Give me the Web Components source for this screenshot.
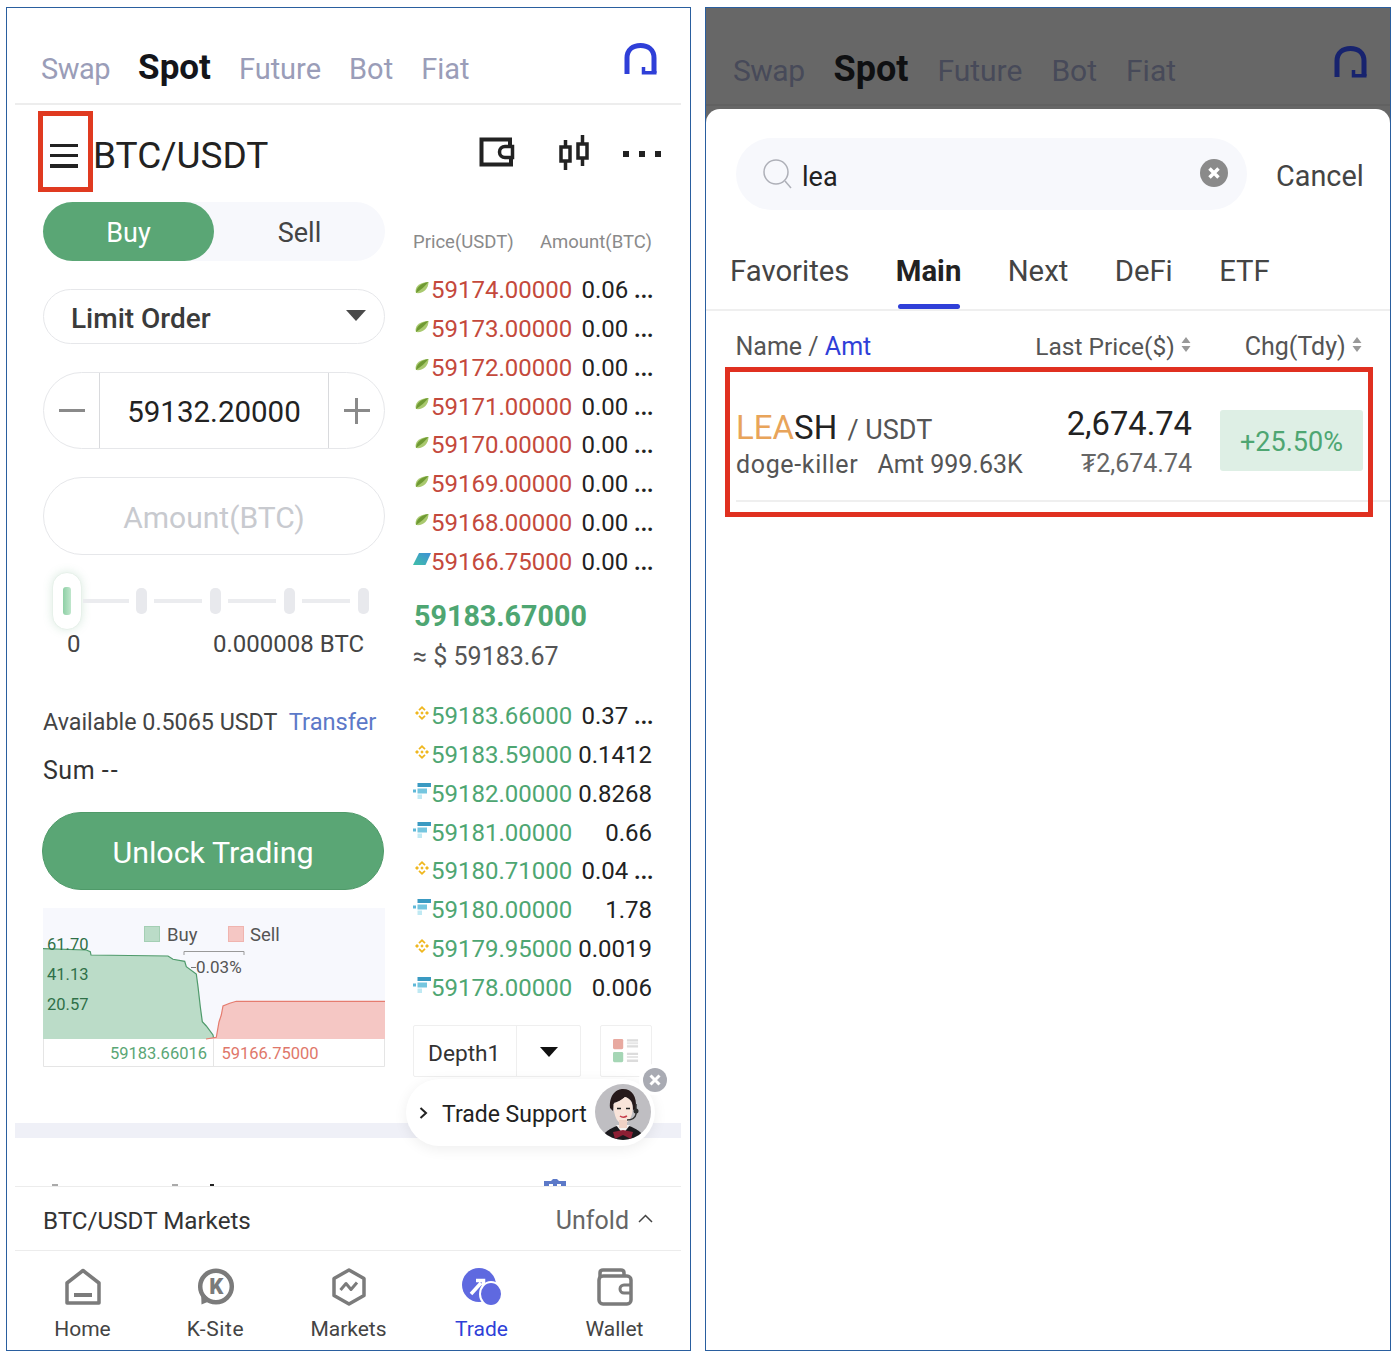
<!DOCTYPE html>
<html><head><meta charset="utf-8"><style>
html,body{margin:0;padding:0;background:#fff}
body{width:1400px;height:1362px;overflow:hidden;font-family:Roboto,"Liberation Sans",sans-serif;box-sizing:border-box;padding:7px 0 0 6px;display:flex;gap:14px;align-items:flex-start}
</style></head><body>
<x-phone>
  <x-topbar tone="light"></x-topbar>
  <x-pair></x-pair>
  <x-trade>
    <x-toggle slot="form"></x-toggle>
    <x-limit slot="form"></x-limit>
    <x-stepper slot="form"></x-stepper>
    <x-amount slot="form"></x-amount>
    <x-slider slot="form"></x-slider>
    <x-summary slot="form"></x-summary>
    <x-unlock slot="form"></x-unlock>
    <x-depth-chart slot="form"></x-depth-chart>
    <x-book slot="book"></x-book>
  </x-trade>
  <x-lower></x-lower>
  <x-markets></x-markets>
  <x-nav></x-nav>
  <x-support></x-support>
  <x-mark style="left:31px;top:103px;width:55px;height:81px"></x-mark>
</x-phone>
<x-phone style="width:686px;background:#676767">
  <x-topbar tone="dark"></x-topbar>
  <x-sheet></x-sheet>
</x-phone>
<script>
const IC={
 leaf:`<svg viewBox="0 0 14 13"><path d="M1 12C-1 6 5 1 13.500 1 13.500 8 8 13 1 12Z" fill="#a9c96f"/><path d="M1 12C1 7 6 2 13.500 1 10 5 6 9 1 12Z" fill="#6f9a33"/></svg>`,
 para:`<svg viewBox="0 0 18 14"><defs><linearGradient id="pg" x1="0" y1="1" x2="1" y2="0"><stop offset="0" stop-color="#3fc0a8"/><stop offset="1" stop-color="#3f8fd6"/></linearGradient></defs><path d="M6 1H18L12.500 13H0Z" fill="url(#pg)"/></svg>`,
 bnb:`<svg viewBox="0 0 14 14" fill="#efb71f"><path d="M7 5.300 8.700 7 7 8.700 5.300 7Z"/><path d="M7 0 10.600 3.600 9.400 4.800 7 2.400 4.600 4.800 3.400 3.600Z"/><path d="M7 14 10.600 10.400 9.400 9.200 7 11.600 4.600 9.200 3.400 10.400Z"/><path d="M0 7 2 5 4 7 2 9Z"/><path d="M14 7 12 5 10 7 12 9Z"/></svg>`,
 bars:`<svg viewBox="0 0 18 16"><rect x="4.500" y="0" width="13.500" height="4" fill="#3a9ac2"/><rect x="0" y="6.500" width="3" height="3" fill="#5fb8d8"/><rect x="4.500" y="5.500" width="9.500" height="5" fill="#75c6df"/><rect x="4.500" y="11.500" width="4.500" height="4.500" fill="#bfe9f3"/></svg>`,
 head:`<svg viewBox="0 0 33 32" fill="none" stroke="currentColor"><path d="M3 31V15C3 6.500 9 2.500 16.500 2.500S30 6.500 30 15V30" stroke-width="5"/><path d="M32.500 29.800H19.500V24" stroke-width="3.500"/></svg>`,
 wallet:`<svg viewBox="0 0 36 30" fill="none" stroke="#222" stroke-width="4"><path d="M31 8V2.500H2.500V27.500H32V22"/><path d="M33.500 9.500H26A5.500 5.500 0 0 0 26 20.500H33.500Z" stroke-width="3.500"/></svg>`,
 candle:`<svg viewBox="0 0 30 35" fill="none" stroke="#222" stroke-width="3.500"><rect x="2" y="12" width="9" height="14"/><rect x="19" y="9" width="9" height="14"/><path d="M6.500 5V12M6.500 26V35M23.500 0V9M23.500 23V31"/></svg>`,
 home:`<svg viewBox="0 0 36 38" fill="none" stroke="#7b7b7b" stroke-width="3.500" stroke-linejoin="round"><path d="M18 2.500 34 15V35H2V15Z"/><path d="M9 27H27" stroke-width="4"/></svg>`,
 ksite:`<svg viewBox="0 0 38 38" fill="none"><circle cx="19" cy="18.500" r="15.800" stroke="#7b7b7b" stroke-width="4.500"/><path d="M4 22 4.500 36.500 13 33Z" fill="#7b7b7b"/><text x="19.500" y="26" text-anchor="middle" font-family="Roboto" font-weight="900" font-size="22" fill="#7b7b7b">K</text></svg>`,
 markets:`<svg viewBox="0 0 36 38" fill="none" stroke="#7b7b7b" stroke-width="3.500" stroke-linejoin="round"><path d="M18 2 33 10.500V27.500L18 36 3 27.500V10.500Z"/><path d="M9.500 22 15 15.500 20 21.500 26 14.500" stroke-width="3"/></svg>`,
 trade:`<svg viewBox="0 0 40 38"><ellipse cx="17" cy="17" rx="17" ry="17" fill="#5f69e0"/><path d="M9 26 19 15M14 12.500H21.500V20" fill="none" stroke="#fff" stroke-width="3.500"/><ellipse cx="29" cy="26" rx="11" ry="12" fill="#5f69e0" stroke="#fff" stroke-width="2"/></svg>`,
 purse:`<svg viewBox="0 0 36 38" fill="none" stroke="#7b7b7b" stroke-width="3.500" stroke-linejoin="round"><path d="M3 10V5Q3 2 6 2H24Q27 2 27 5V8"/><rect x="2" y="8" width="32" height="28" rx="4"/><path d="M34 17H27A4 4 0 0 0 27 25H34" stroke-width="3"/></svg>`,
 layout:`<svg viewBox="0 0 28 26"><rect x="0" y="0" width="11" height="11" rx="1.500" fill="#e8a9a0"/><rect x="0" y="14" width="11" height="11" rx="1.500" fill="#a5d6b5"/><path d="M15 1.500H27M15 8H27M15 16H27M15 23.500H27" stroke="#dcdcdc" stroke-width="2.500"/><path d="M15 4.700H27M15 19.500H27" stroke="#e6e6e6" stroke-width="2"/></svg>`
};
function ce(name,css,html,init){customElements.define(name,class extends HTMLElement{
  connectedCallback(){ if(this.shadowRoot)return; const r=this.attachShadow({mode:'open'});
    const h=typeof html==='function'?html(this):html;
    r.innerHTML=`<style>${css}</style>${h}`; init&&init(this,r);} });}
const ICO=(n,w,h,st='')=>`<x-icon name="${n}" style="width:${w}px;height:${h}px;${st}"></x-icon>`;
ce('x-icon',':host{display:inline-block;flex:none;line-height:0}svg{width:100%;height:100%;display:block}',e=>IC[e.getAttribute('name')]);
ce('x-phone',`:host{display:flex;flex-direction:column;position:relative;box-sizing:border-box;width:685px;height:1344px;border:1px solid #2a5f9f;background:#fff;overflow:hidden}`,'<slot></slot>');
ce('x-mark',`:host{position:absolute;box-sizing:border-box;border:5px solid #e03a20}`,'');
ce('x-topbar',`:host{display:flex;align-items:baseline;box-sizing:border-box;height:97px;flex:none;padding:0 0 0 34px;gap:28px;font-size:29px;color:#9a9db8;position:relative}
 .line{position:absolute;left:8px;right:9px;top:95px;height:2px;background:#ededed}
 .sw{letter-spacing:-.5px}
 :host([tone=dark]){background:#676767;color:#474a59;font-size:30px;gap:29px;padding-left:27px;height:115px;margin-bottom:-14px}
 :host([tone=dark]) .line{top:96px;left:0;right:0;height:2px;background:#616161}
 :host([tone=dark]) b{color:#0f1012;font-size:36px}
 :host([tone=dark]) span{padding-top:48px}
 :host([tone=dark]) .h{right:23px;top:38px;color:#17236e}
 span,b{line-height:1;padding-top:47px} b{font-size:35px;color:#14151a;font-weight:700;padding-top:0}
 .h{position:absolute;right:33px;top:35px;color:#2f3fd8}`,
 e=>`<span class="sw">Swap</span><b>Spot</b><span>Future</span><span>Bot</span><span>Fiat</span><div class="line"></div><div class="h">${ICO('head',33,32)}</div>`);
ce('x-pair',`:host{display:flex;align-items:center;box-sizing:border-box;height:97px;flex:none;padding:0 29px 0 43px;position:relative}
 .m{width:28px;height:24px;display:flex;flex-direction:column;justify-content:space-between;margin-top:4px} .m i{display:block;height:3.500px;background:#222}
 .t{font-size:37px;color:#222;margin-left:15px;margin-top:3px;flex:1}
 .r{display:flex;align-items:center;margin-top:-3px}
 .d{display:flex;gap:10px;margin-left:34px;margin-top:3px}.d i{width:6px;height:6px;background:#222;display:block}`,
 `<div class="m"><i></i><i></i><i></i></div><div class="t">BTC/USDT</div><div class="r">${ICO('wallet',36,30)}<span style="width:44px"></span>${ICO('candle',30,35)}<div class="d"><i></i><i></i><i></i></div></div>`);
ce('x-trade',`:host{display:grid;grid-template-columns:342px 239px;column-gap:28px;box-sizing:border-box;height:921px;flex:none;padding-left:36px}
 .f,.b{display:flex;flex-direction:column;min-width:0}`,`<div class="f"><slot name="form"></slot></div><div class="b"><slot name="book"></slot></div>`);
ce('x-toggle',`:host{display:grid;grid-template-columns:171px 1fr;height:59px;background:#f7f8fc;border-radius:30px;font-size:27px;color:#444;flex:none}
 div{display:flex;align-items:center;justify-content:center;padding-top:3px;box-sizing:border-box}.a{background:#5aa675;color:#fff;border-radius:30px}`,`<div class="a">Buy</div><div>Sell</div>`);
ce('x-limit',`:host{display:flex;align-items:center;justify-content:space-between;box-sizing:border-box;height:55px;margin-top:28px;border:1px solid #e6e7ea;border-radius:28px;padding:0 18px 0 27px;font-size:28px;font-weight:500;color:#3b3b3b;flex:none}
 span{padding-top:4px}i{width:0;height:0;border:10px solid transparent;border-top:11px solid #4a4a4a;border-bottom:0;margin-top:-3px}`,`<span>Limit Order</span><i></i>`);
ce('x-stepper',`:host{display:grid;grid-template-columns:55px 1fr 55px;box-sizing:border-box;height:77px;margin-top:28px;border:1px solid #e6e7ea;border-radius:39px;font-size:29.500px;color:#222;flex:none}
 div{display:flex;align-items:center;justify-content:center;position:relative}
 .v{border-left:1px solid #d9dadd;border-right:1px solid #d9dadd;padding-top:3px}
 .mi::after{content:"";width:26px;height:3px;background:#8a8a8a}
 .pl::after{content:"";width:26px;height:3px;background:#8a8a8a}.pl::before{content:"";position:absolute;width:3px;height:26px;background:#8a8a8a}`,
 `<div class="mi"></div><div class="v">59132.20000</div><div class="pl"></div>`);
ce('x-amount',`:host{display:flex;align-items:center;justify-content:center;box-sizing:border-box;height:78px;margin-top:28px;padding-top:2px;border:1px solid #e6e7ea;border-radius:39px;font-size:30px;color:#c8cacf;flex:none}`,`Amount(BTC)`);
ce('x-slider',`:host{display:block;height:88px;margin-top:17px;flex:none;position:relative;font-size:24px;color:#444}
 .tr{display:flex;align-items:center;height:58px;padding-left:9px}
 .th{width:30px;height:58px;box-sizing:border-box;background:#fff;border:1px solid #e7f1ea;border-radius:15px;box-shadow:0 0 10px rgba(90,166,117,.22);display:flex;align-items:center;justify-content:center;flex:none}
 .th i{display:block;width:8px;height:28px;border-radius:3px;background:linear-gradient(90deg,#8fd0a6,#bfe6cc)}
 .l{height:4px;background:#ebecef;flex:none}.d{width:11px;height:26px;border-radius:5px;background:#e8e9ed;flex:none}
 .lb{display:flex;justify-content:space-between;padding:0 21px 0 24px;line-height:28px}`,
 `<div class="tr"><div class="th"><i></i></div><div class="l" style="width:46px;margin-left:1px"></div><div class="d" style="margin-left:7px"></div><div class="l" style="width:48px;margin-left:7px"></div><div class="d" style="margin-left:8px"></div><div class="l" style="width:48px;margin-left:7px"></div><div class="d" style="margin-left:8px"></div><div class="l" style="width:48px;margin-left:7px"></div><div class="d" style="margin-left:8px"></div></div><div class="lb"><span>0</span><span>0.000008 BTC</span></div>`);
ce('x-summary',`:host{display:block;box-sizing:border-box;font-size:23.300px;color:#444;flex:none;height:152px;padding-top:38px}
 div{line-height:48px;white-space:nowrap}a{color:#5c79c8;margin-left:6px;font-size:23.700px}.s{color:#333;font-size:25px;letter-spacing:.5px;padding-top:1px}.s span{letter-spacing:2px}`,`<div>Available 0.5065 USDT <a>Transfer</a></div><div class="s">Sum <span>--</span></div>`);
ce('x-unlock',`:host{display:flex;align-items:center;justify-content:center;box-sizing:border-box;width:342px;height:78px;margin-left:-1px;padding-top:2px;background:#5aa675;border:1px solid #4f9a69;border-radius:39px;color:#fff;font-size:30.400px;flex:none}`,`Unlock Trading`);
ce('x-depth-chart',`:host{display:block;width:342px;height:159px;margin-top:18px;flex:none}svg{display:block;width:342px;height:159px}text{font-family:Roboto,sans-serif}`,
`<svg viewBox="0 0 342 159">
<rect width="342" height="131" fill="#f7f8fd"/>
<path d="M0 40.700 43.300 42 47.300 43.700 48 47 125 48 130 51.300 141.700 53.300 143.300 58.700 153.300 66 155 78.700 157.300 98.700 159.300 113.700 163.300 118 170 127 170.700 131H0Z" fill="#bbdcc8"/>
<path d="M0 40.700 43.300 42 47.300 43.700 48 47 125 48 130 51.300 141.700 53.300 143.300 58.700 153.300 66 155 78.700 157.300 98.700 159.300 113.700 163.300 118 170 127 170.700 131" fill="none" stroke="#4f9a6b" stroke-width="1.200"/>
<path d="M163 131 173.300 129.300 176 114 178.300 107 180 98 186.700 95.300 193.300 93.300H342V131Z" fill="#f5c7c4"/>
<path d="M163 131 173.300 129.300 176 114 178.300 107 180 98 186.700 95.300 193.300 93.300H342" fill="none" stroke="#e57c6f" stroke-width="1.200"/>
<rect x="101.500" y="18.500" width="15" height="15" fill="#bbdcc8" stroke="#a4cfb4"/><text x="124" y="33" font-size="18.500" fill="#555">Buy</text>
<rect x="185.500" y="18.500" width="15" height="15" fill="#f5c7c4" stroke="#f0b4af"/><text x="207" y="33" font-size="18.500" fill="#555">Sell</text>
<path d="M141 47V43.500H201V47" fill="none" stroke="#999"/>
<path d="M148 59.500H153" stroke="#777"/>
<text x="153" y="65" font-size="17" fill="#555">0.03%</text>
<g font-size="16.500" fill="#2f7048"><text x="4" y="42">61.70</text><text x="4" y="72">41.13</text><text x="4" y="102">20.57</text></g>
<path d="M.5 131V158.500H341.500V131M170.500 131V158.500" fill="none" stroke="#e5e5e5"/>
<text x="164" y="151" text-anchor="end" font-size="16.500" fill="#5aa675">59183.66016</text>
<text x="178.500" y="151" font-size="16.500" fill="#e0776a">59166.75000</text>
</svg>`);
ce('x-book-row',`:host{display:flex;align-items:center;height:38.750px;flex:none}
 .i{width:18px;height:16px;display:flex;align-items:center;justify-content:center;flex:none;margin-top:-6px}
 .p{font-size:24px;width:141px;flex:none}.a{flex:1;text-align:right;font-size:24px;color:#222;white-space:nowrap;line-height:28px}
 .a span{font-size:31px;margin:0 -2px 0 5px;line-height:0}
 :host([side=ask]) .p{color:#c4493c}:host([side=bid]) .p{color:#4ea672}`,
 e=>{const n=e.getAttribute('icon');const s={leaf:[14,13],para:[18,14],bnb:[14,14],bars:[18,16]}[n];
  return `<div class="i">${ICO(n,s[0],s[1])}</div><div class="p">${e.getAttribute('price')}</div><div class="a">${e.getAttribute('amt').replace('…','<span>…</span>')}</div>`});
const row=(s,i,p,a)=>`<x-book-row side="${s}" icon="${i}" price="${p}" amt="${a}"></x-book-row>`;
ce('x-book',`:host{display:flex;flex-direction:column;height:921px}
 .h{display:flex;justify-content:space-between;font-size:18.500px;color:#8a8a8a;height:69px;line-height:80px;flex:none}
 .m{font-size:28.700px;font-weight:700;color:#4ea672;margin-top:17px;line-height:36px;height:36px;padding-left:1px}
 .u{font-size:25px;color:#555;line-height:36px;margin-top:5px;height:58px}
 .d{display:flex;margin-top:18px;gap:19px}
 .s{display:flex;width:169px;height:52px;box-sizing:border-box;border:1px solid #efefef;border-radius:2px;font-size:22.700px;color:#333;align-items:center}
 .s span{width:103px;padding:3px 0 0 14px;box-sizing:border-box;border-right:1px solid #efefef;height:100%;line-height:50px}
 .s i{width:0;height:0;border:9px solid transparent;border-top:10px solid #111;border-bottom:0;margin-left:23px;margin-top:2px}
 .l{width:52px;height:52px;box-sizing:border-box;border:1px solid #efefef;border-radius:2px;display:flex;align-items:center;justify-content:center}`,
 `<div class="h"><span>Price(USDT)</span><span>Amount(BTC)</span></div>`+
 [["leaf","59174.00000","0.06…"],["leaf","59173.00000","0.00…"],["leaf","59172.00000","0.00…"],["leaf","59171.00000","0.00…"],["leaf","59170.00000","0.00…"],["leaf","59169.00000","0.00…"],["leaf","59168.00000","0.00…"],["para","59166.75000","0.00…"]].map(r=>row('ask',...r)).join('')+
 `<div class="m">59183.67000</div><div class="u">≈ $ 59183.67</div>`+
 [["bnb","59183.66000","0.37…"],["bnb","59183.59000","0.1412"],["bars","59182.00000","0.8268"],["bars","59181.00000","0.66"],["bnb","59180.71000","0.04…"],["bars","59180.00000","1.78"],["bnb","59179.95000","0.0019"],["bars","59178.00000","0.006"]].map(r=>row('bid',...r)).join('')+
 `<div class="d"><div class="s"><span>Depth1</span><i></i></div><div class="l">${ICO('layout',26,26)}</div></div>`);
ce('x-lower',`:host{display:block;flex:none;height:63px;position:relative;overflow:hidden}
 .b{height:15px;margin:0 9px 0 8px;background:#eff0f7}
 svg{position:absolute;left:537px;top:56px;width:22px;height:7px}
 i{position:absolute;top:61px;height:2px;display:block}`,
 `<div class="b"></div><svg viewBox="0 0 22 7"><path d="M0 2H7L9 0H13L15 2H22V7H17V5H13V7H9V5H5V7H0Z" fill="#5c79c8"/></svg><i style="left:45px;width:6px;background:#aaa"></i><i style="left:165px;width:6px;background:#aaa"></i><i style="left:203px;width:4px;background:#222"></i>`);
ce('x-markets',`:host{display:flex;align-items:center;justify-content:space-between;box-sizing:border-box;height:65px;flex:none;margin:0 9px 0 8px;padding:4px 28px 0 28px;border-top:1px solid #ececec;border-bottom:1px solid #ececec;font-size:24.200px;color:#333}
 .u{color:#666;display:flex;align-items:center;gap:9px;font-size:25px}
 .u svg{width:15px;height:9px;margin-top:-5px}`,`<span>BTC/USDT Markets</span><span class="u">Unfold<svg viewBox="0 0 15 9" fill="none" stroke="#444" stroke-width="1.500"><path d="M1 8 7.500 1.500 14 8"/></svg></span>`);
ce('x-nav',`:host{display:grid;grid-template-columns:repeat(5,133px);padding-left:9px;flex:1;padding-top:17px;box-sizing:border-box}
 div{display:flex;flex-direction:column;align-items:center;font-size:21px;color:#444}
 .on{color:#2f3fd8}.k{letter-spacing:.6px}`,
 `<div>${ICO('home',36,38,'margin-bottom:11px')}Home</div><div class="k">${ICO('ksite',38,38,'margin-bottom:11px')}K-Site</div><div>${ICO('markets',36,38,'margin-bottom:11px')}Markets</div><div class="on">${ICO('trade',40,38,'margin-bottom:11px')}Trade</div><div>${ICO('purse',36,38,'margin-bottom:11px')}Wallet</div>`);
ce('x-support',`:host{position:absolute;left:399px;top:1071px;width:249px;height:67px;background:#fff;border-radius:34px;box-shadow:0 3px 14px rgba(0,0,0,.07);display:flex;align-items:center;font-size:23px;color:#222}
 .c{margin-left:13px;width:9px;height:14px;margin-right:14px}.av{position:absolute;right:4px;top:5px;width:56px;height:56px}
 span{padding-top:4px}
 .x{position:absolute;right:-15px;top:-15px;width:31px;height:31px;border-radius:50%;background:#fff;display:flex;align-items:center;justify-content:center}
 .x svg{width:24px;height:24px}`,
 `<svg class="c" viewBox="0 0 9 14" fill="none" stroke="#222" stroke-width="2"><path d="M1.500 2 7 7 1.500 12"/></svg><span>Trade Support</span>
 <svg class="av" viewBox="0 0 56 56"><defs><clipPath id="avc"><circle cx="28" cy="28" r="28"/></clipPath></defs><g clip-path="url(#avc)"><rect width="56" height="56" fill="#bfbec2"/>
 <path d="M6 56C8 48 16 44 22 42H34C40 44 48 48 50 56Z" fill="#1b1a1e"/><path d="M21 41 28 50 35 41Z" fill="#f3f1f0"/><path d="M18 48 28 46 38 48 36 55 28 51 20 55Z" fill="#8c1f34"/>
 <path d="M15 24C14 10 22 5 28 5 37 5 42 12 41 25L38 26C38 18 36 15 30 13 26 17 21 18 19 19L18 27Z" fill="#26191a"/>
 <path d="M18.500 20C22 18 27 16 30 13 36 15 38 19 37.500 27 37 34 32 40 28 40 23 40 18.500 33 18.500 20Z" fill="#f9e4da"/>
 <rect x="24" y="36" width="8" height="8" fill="#f0d2c6"/><path d="M22 24.500H26M31 24.500H35" stroke="#222" stroke-width="1.300"/><path d="M25 32Q28 34.500 32 32" stroke="#c63b4a" stroke-width="1.500" fill="none"/>
 <path d="M41 20V30Q40 36 32 36" stroke="#333" stroke-width="1.500" fill="none"/><circle cx="41" cy="27" r="2.500" fill="#2a2a2a"/></g></svg>
 <div class="x"><svg viewBox="0 0 24 24"><circle cx="12" cy="12" r="12" fill="#a9abb3"/><path d="M7.500 7.500 16.500 16.500M16.500 7.500 7.500 16.500" stroke="#fff" stroke-width="3"/></svg></div>`);
ce('x-sheet',`:host{display:block;flex:1;background:#fff;border-radius:14px 14px 0 0;position:relative;min-height:0}
 .sr{display:flex;align-items:center;padding:29px 0 0 30px}
 .sb{width:511px;height:72px;border-radius:36px;background:#f7f8fc;display:flex;align-items:center;padding:0 19px 0 27px;box-sizing:border-box;font-size:27px;color:#222}
 .sb .q{width:29px;height:30px;margin-right:10px;flex:none}.sb span{flex:1;padding-top:5px}
 .sb .cl{width:28px;height:28px;flex:none;margin-top:-2px}
 .ca{font-size:28.800px;color:#444;margin-left:29px;padding-top:4px}
 .tabs{display:flex;gap:46.400px;padding:44px 0 0 24px;font-size:29.300px;color:#444;height:55px;border-bottom:2px solid #efefef;position:relative}
 .tabs b{color:#222;font-weight:700;position:relative;height:34px}.tabs b::after{content:"";position:absolute;left:2px;right:1px;top:50px;height:5px;border-radius:3px;background:#2f3fd8}
 .hd{display:flex;align-items:center;height:56px;padding:14px 0 0 29.500px;box-sizing:border-box;font-size:25px;color:#555}
 .hd a{color:#2f3fd8}.hd .ar{width:10px;height:15px;margin-left:6px;flex:none;margin-top:-3px}
 .row{display:grid;grid-template-columns:314px 142px 172px;margin-left:30px;height:135px;border-bottom:2px solid #efefef;box-sizing:border-box;padding-top:38px}
 .n{font-size:33px;color:#222;line-height:46px;white-space:nowrap}.n em{font-style:normal;color:#e8a45a}.n small{font-size:27px;color:#555;margin-left:2px}
 .s2{font-size:25px;color:#555;line-height:30px;white-space:nowrap;margin-top:-3px;letter-spacing:.65px}.s2 span{margin-left:13px;letter-spacing:0}
 .pr{text-align:right;white-space:nowrap}.pr b{display:block;font-weight:400;font-size:32.700px;color:#222;line-height:46px;margin-top:-4px}.pr span{display:block;font-size:25px;color:#666;line-height:34px}
 .bd{width:143px;height:61px;margin:5px 0 0 28px;padding-top:3px;box-sizing:border-box;background:#deefe5;border-radius:3px;color:#4ea672;font-size:27px;display:flex;align-items:center;justify-content:center}
 .mk{position:absolute;left:19px;top:258px;width:648px;height:150px;box-sizing:border-box;border:5px solid #e03020}`,
 ()=>{const ar=`<svg class="ar" viewBox="0 0 10 15"><path d="M5 0 9.500 6H.5ZM5 15 9.500 9H.5Z" fill="#999"/></svg>`;
 return `<div class="sr"><div class="sb"><svg class="q" viewBox="0 0 29 30" fill="none" stroke="#aeb0b8" stroke-width="1.500"><circle cx="13" cy="13" r="12"/><path d="M22 22 28 29"/></svg><span>lea</span><svg class="cl" viewBox="0 0 28 28"><circle cx="14" cy="14" r="14" fill="#8a8a8a"/><path d="M9.500 9.500 18.500 18.500M18.500 9.500 9.500 18.500" stroke="#fff" stroke-width="3.500"/></svg></div><div class="ca">Cancel</div></div>
 <div class="tabs"><span>Favorites</span><b>Main</b><span>Next</span><span>DeFi</span><span>ETF</span></div>
 <div class="hd"><span>Name / <a>Amt</a></span><span style="margin-left:164px;font-size:24.500px">Last Price($)</span>${ar}<span style="margin-left:54px">Chg(Tdy)</span>${ar}</div>
 <div class="row"><div><div class="n"><em>LEA</em>SH <small>/ USDT</small></div><div class="s2">doge-killer<span> Amt 999.63K</span></div></div><div class="pr"><b>2,674.74</b><span>₮2,674.74</span></div><div class="bd">+25.50%</div></div>
 <div class="mk"></div>`});
</script>
</body></html>
